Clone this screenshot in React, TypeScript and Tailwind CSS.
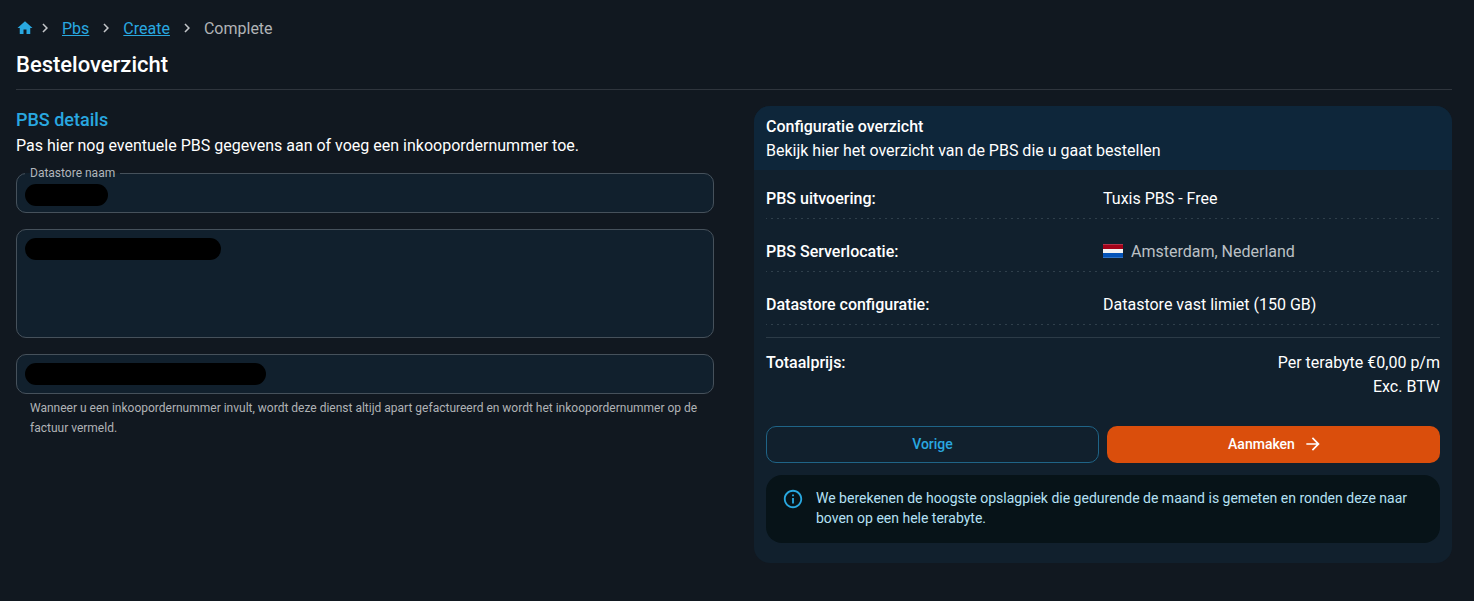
import type { ReactNode } from "react";
import { MdArrowForward, MdChevronRight, MdHome, MdInfoOutline } from "react-icons/md";

function Separator() {
  return <MdChevronRight aria-hidden className="size-[18px] text-[#c3c6c9]" />;
}

function Mask({ className }: { className: string }) {
  return <span aria-hidden className={`pointer-events-none absolute h-[22px] rounded-full bg-black ${className}`} />;
}

function DutchFlag() {
  return (
    <svg viewBox="0 0 20 14" className="mt-1 h-3.5 w-5" aria-hidden>
      <rect width="20" height="14" fill="#f3f3f3" />
      <rect width="20" height="5" fill="#a50219" />
      <rect width="20" height="1" fill="#b5344a" />
      <rect y="9" width="20" height="5" fill="#0453b8" />
      <rect y="13" width="20" height="1" fill="#2f73c6" />
    </svg>
  );
}

function SummaryRow({ label, children }: { label: string; children: ReactNode }) {
  return (
    <div className="grid grid-cols-2 bg-[repeating-linear-gradient(to_right,#2f3f4b_0_1px,transparent_1px_5px,#2f3f4b_5px_6px)] bg-[length:100%_1px] bg-bottom bg-no-repeat pb-2">
      <dt className="font-medium">{label}</dt>
      <dd>{children}</dd>
    </div>
  );
}

export default function App() {
  return (
    <div className="min-h-screen bg-[#111820] pt-[15px] pr-[22px] pb-4 pl-4 font-[Roboto,'Liberation_Sans',sans-serif] text-base text-white">
      <nav aria-label="Breadcrumb" className="flex items-center text-[#b0b3b6]">
        <a href="#home" aria-label="Home" className="mr-0.5 text-[#29a8e0]">
          <MdHome className="size-[18px]" />
        </a>
        <div className="flex items-center gap-2">
          <Separator />
          <a href="#pbs" className="pt-0.5 text-[#29a8e0] underline">Pbs</a>
          <Separator />
          <a href="#create" className="pt-0.5 text-[#29a8e0] underline">Create</a>
          <Separator />
          <span aria-current="page" className="pt-0.5">Complete</span>
        </div>
      </nav>

      <h1 className="mt-2 border-b border-[#2f353d] pb-2 text-[22px] leading-8 font-medium">Besteloverzicht</h1>

      <div className="mt-4 grid grid-cols-2 items-start gap-10">
        <form>
          <h2 className="mb-px text-lg leading-[27px] font-medium text-[#29a8e0]">PBS details</h2>
          <p>Pas hier nog eventuele PBS gegevens aan of voeg een inkoopordernummer toe.</p>

          <fieldset className="relative mt-[5px] rounded-[10px] border border-[#46515b] bg-[#11202d]">
            <legend className="ml-2 px-[5px] text-xs leading-5 text-[#b0b6bb]">
              <label htmlFor="datastore">Datastore naam</label>
            </legend>
            <input id="datastore" type="text" className="block h-[29px] w-full bg-transparent px-3 outline-none" />
            <Mask className="bottom-1.5 left-2 w-[83px]" />
          </fieldset>

          <div className="relative mt-4">
            <textarea
              aria-label="Omschrijving"
              className="block h-[109px] w-full resize-none rounded-[10px] border border-[#46515b] bg-[#11202d] px-3 py-2 outline-none"
            />
            <Mask className="top-[9px] left-[9px] w-[196px]" />
          </div>

          <div className="relative mt-4">
            <input
              type="text"
              aria-label="Inkoopordernummer"
              aria-describedby="order-help"
              className="block h-10 w-full rounded-[10px] border border-[#46515b] bg-[#11202d] px-3 outline-none"
            />
            <Mask className="top-[9px] left-[9px] w-[241px]" />
          </div>
          <p id="order-help" className="mx-3.5 mt-1 text-xs leading-5 text-[#b0b3b6]">
            Wanneer u een inkoopordernummer invult, wordt deze dienst altijd apart gefactureerd en wordt het
            inkoopordernummer op de factuur vermeld.
          </p>
        </form>

        <section className="overflow-hidden rounded-2xl bg-[#11202d]">
          <header className="bg-[#0e263a] px-3 pt-[9px] pb-[7px]">
            <h2 className="font-medium">Configuratie overzicht</h2>
            <p>Bekijk hier het overzicht van de PBS die u gaat bestellen</p>
          </header>

          <div className="px-3 pt-[17px] pb-5">
            <dl className="flex flex-col gap-[21px]">
              <SummaryRow label="PBS uitvoering:">Tuxis PBS - Free</SummaryRow>
              <SummaryRow label="PBS Serverlocatie:">
                <span className="flex items-start gap-2 text-[#bcc1c5]">
                  <DutchFlag />
                  Amsterdam, Nederland
                </span>
              </SummaryRow>
              <SummaryRow label="Datastore configuratie:">Datastore vast limiet (150 GB)</SummaryRow>
            </dl>

            <div className="mt-3 flex justify-between border-t border-[#2c3b47] pt-[13px]">
              <span className="font-medium">Totaalprijs:</span>
              <p className="text-right">
                Per terabyte €0,00 p/m
                <br />
                Exc. BTW
              </p>
            </div>

            <div className="mt-[27px] grid grid-cols-2 gap-2 text-sm font-medium">
              <button type="button" className="h-[37px] rounded-[10px] border border-[#1f6487] pb-0.5 text-[#29a8e0]">
                Vorige
              </button>
              <button
                type="button"
                className="flex h-[37px] items-center justify-center gap-2 rounded-[10px] bg-[#da4e0c] pb-0.5 pl-1"
              >
                Aanmaken
                <MdArrowForward aria-hidden className="size-5" />
              </button>
            </div>

            <div role="note" className="mt-3 flex gap-3 rounded-2xl bg-[#071318] px-4 pt-[13px] pb-[15px] text-sm text-[#b5e1f5]">
              <MdInfoOutline aria-hidden className="size-[22px] shrink-0 text-[#29a8e0]" />
              <p>
                We berekenen de hoogste opslagpiek die gedurende de maand is gemeten en ronden deze naar boven op een
                hele terabyte.
              </p>
            </div>
          </div>
        </section>
      </div>
    </div>
  );
}
